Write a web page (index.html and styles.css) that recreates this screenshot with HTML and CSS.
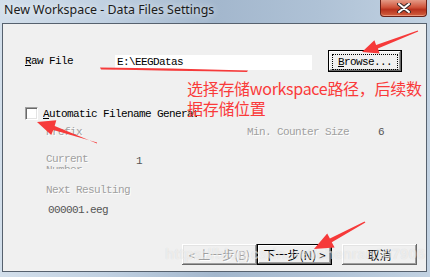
FILE: index.html
```html
<!DOCTYPE html>
<html lang="en">
  <head>
    <meta charset="UTF-8" />
    <meta name="viewport" content="width=device-width, initial-scale=1.0" />
    <title>New Workspace - Data Files Settings</title>
    <link rel="stylesheet" href="styles.css">
  </head>
  <body>
    <div class="window">
      <!-- Title bar -->
      <div class="titlebar">
        <span class="title">New Workspace - Data Files Settings</span>
        <div class="close">
          <svg width="14" height="10" viewBox="0 0 14 10">
            <path d="M2 1 L12 9 M12 1 L2 9" stroke="#3a2a2a" stroke-width="4" stroke-linecap="round" />
            <path d="M2 1 L12 9 M12 1 L2 9" stroke="#fff" stroke-width="2" stroke-linecap="round" />
          </svg>
        </div>
      </div>

      <!-- Dialog body -->
      <div class="client">
        <div class="row raw-row">
          <span class="raw-label"><u>R</u>aw File</span>
          <div class="path">E:\EEGDatas</div>
          <button class="btn default browse"><span class="focus"><u>B</u>rowse...</span></button>
        </div>

        <div class="row check-row">
          <span class="checkbox"></span>
          <span class="check-label"><u>A</u>utomatic Filename Generation</span>
        </div>

        <div class="row prefix-row">
          <span class="dim prefix">Prefix</span>
          <span class="dim min">Min. Counter Size</span>
          <span class="value">6</span>
        </div>

        <div class="row current-row">
          <span class="dim current">Current Number</span>
          <span class="value">1</span>
        </div>

        <div class="row next-row">
          <span class="dim">Next Resulting</span>
        </div>

        <div class="row file-row">000001.eeg</div>

        <div class="buttons">
          <button class="btn disabled">&lt; 上一步(B)</button>
          <button class="btn default">下一步(N) &gt;</button>
          <button class="btn cancel">取消</button>
        </div>

        <div class="watermark">https://blog.csdn.net/chenran107906</div>
      </div>

      <!-- Red annotations drawn over the screenshot -->
      <div class="note">选择存储workspace路径，后续数<br>据存储位置</div>
      <svg class="marks" width="430" height="277" viewBox="0 0 430 277">
        <path d="M100 67.5 Q170 68 248 70.5 L247 72 Q170 70.5 101 69.5 Z" fill="#f63a3a" />
        <polygon points="418.2,31.5 377.9,48.6 379.6,53.4 362,52 374.4,40.3 376.1,44.9 417.8,30.5" fill="#f63a3a" />
        <polygon points="97,143.5 54.7,126 56.3,120.3 37,122 51.2,135.1 53.3,130 97,142.5" fill="#f63a3a" />
        <polygon points="365.4,222.6 331.8,242.2 334.6,247.4 314,249 327.2,233.6 329.9,238.6 364.6,221.4" fill="#f63a3a" />
      </svg>
    </div>
  </body>
</html>
```

FILE: styles.css
```css
/* Win7 basic dialog look */
body {
  margin: 0;
  width: 430px;
  height: 277px;
  overflow: hidden;
  font-family: "Liberation Mono", monospace;
}
.window {
  position: relative;
  width: 430px;
  height: 277px;
  box-sizing: border-box;
  padding: 0 3px 5px 2px;
  display: flex;
  flex-direction: column;
  background: linear-gradient(90deg, #d3dfeb 0%, #c0d0e1 25%, #a3b7cd 50%, #afc2d6 75%, #c2d2e2 100%);
}
.titlebar {
  height: 23px;
  display: flex;
  align-items: flex-start;
  justify-content: space-between;
}
.title {
  font-family: "Noto Sans", sans-serif;
  font-size: 12.4px;
  line-height: 20px;
  margin-left: 2px;
  color: #1b1b1b;
  text-shadow: 0 0 6px rgba(255, 255, 255, 0.9);
}
.close {
  width: 45px;
  height: 16px;
  border: 1px solid #6a2118;
  border-top: none;
  border-radius: 0 0 4px 4px;
  background: linear-gradient(180deg, #e49a86 0%, #d0553c 45%, #b8321e 60%, #d2603f 100%);
  box-shadow: inset 0 -1px 0 rgba(255, 200, 180, 0.5);
  display: flex;
  align-items: center;
  justify-content: center;
}
.client {
  position: relative;
  flex: 1;
  border: 1px solid #56616e;
  background: #f0f0f0;
  display: flex;
  flex-direction: column;
  padding: 0 9px 6px 0;
  font-size: 11px;
  letter-spacing: -0.6px;
  color: #000;
  overflow: hidden;
}
.row {
  display: flex;
  align-items: center;
  line-height: 12px;
}
.raw-row {
  margin-top: 26px;
  padding-left: 22px;
  height: 22px;
}
.raw-label {
  width: 90px;
}
.path {
  width: 197px;
  height: 15px;
  line-height: 15px;
  margin-top: 3px;
  margin-right: 16px;
  padding-left: 2px;
  box-sizing: border-box;
  background: #fff;
}
.btn {
  box-sizing: border-box;
  height: 21px;
  width: 75px;
  padding: 0;
  border: none;
  background: #f0f0f0;
  font-family: "Noto Sans CJK SC", sans-serif;
  font-size: 12px;
  color: #000;
  box-shadow: inset -1px -1px #696969, inset 1px 1px #fff, inset -2px -2px #a0a0a0, inset 2px 2px #e3e3e3;
}
.btn.default {
  border: 1px solid #000;
  box-shadow: inset -1px -1px #696969, inset 1px 1px #fff, inset -2px -2px #a0a0a0;
}
.browse {
  width: 74px;
  height: 22px;
  font-family: "Liberation Mono", monospace;
  font-size: 11px;
  letter-spacing: -0.6px;
  padding: 3px;
}
.focus {
  display: block;
  height: 14px;
  line-height: 14px;
  border: 1px dotted #000;
}
.check-row {
  margin-top: 35px;
  padding-left: 22px;
  height: 13px;
}
.checkbox {
  width: 13px;
  height: 13px;
  box-sizing: border-box;
  background: #fff;
  border-top: 1px solid #a0a0a0;
  border-left: 1px solid #a0a0a0;
  border-right: 1px solid #fff;
  border-bottom: 1px solid #fff;
  box-shadow: inset 1px 1px #696969, inset -1px -1px #e3e3e3;
  margin-right: 5px;
}
.check-label {
  width: 154px;
  white-space: nowrap;
  overflow: hidden;
}
.dim {
  color: #a0a0a0;
  text-shadow: 1px 1px 0 #fff;
}
.value {
  color: #555;
}
.prefix-row {
  margin-top: 6px;
  padding-left: 43px;
}
.prefix {
  width: 201px;
}
.min {
  width: 131px;
}
.current-row {
  margin-top: 16px;
  padding-left: 43px;
  align-items: flex-start;
}
.current {
  width: 56px;
  height: 15px;
  line-height: 11px;
  overflow: hidden;
  margin-right: 34px;
}
.current-row .value {
  margin-top: 1px;
}
.next-row {
  margin-top: 15px;
  padding-left: 43px;
}
.file-row {
  margin-top: 8px;
  padding-left: 45px;
  color: #555;
}
.buttons {
  margin-top: auto;
  display: flex;
  justify-content: flex-end;
}
.btn.disabled {
  color: #a0a0a0;
  text-shadow: 1px 1px 0 #fff;
}
.btn.cancel {
  margin-left: 10px;
}
.watermark {
  position: absolute;
  left: 162px;
  top: 221px;
  font-family: "Liberation Sans", sans-serif;
  font-weight: bold;
  font-size: 15px;
  letter-spacing: 0;
  color: rgba(255, 255, 255, 0.55);
  text-shadow: 0 0 1px rgba(0, 0, 0, 0.12);
  white-space: nowrap;
}
.note {
  position: absolute;
  left: 187px;
  top: 78px;
  font-family: "Noto Sans CJK SC", sans-serif;
  font-size: 16px;
  line-height: 20px;
  letter-spacing: -0.3px;
  color: #fa3a3a;
  white-space: nowrap;
}
.marks {
  position: absolute;
  left: 0;
  top: 0;
}
```
